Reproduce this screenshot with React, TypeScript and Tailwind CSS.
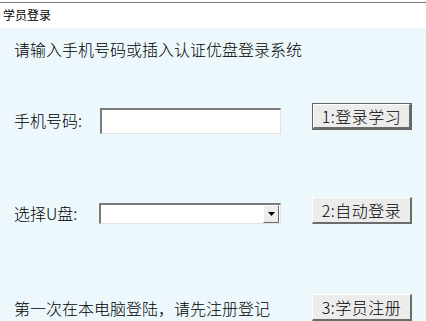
import React from 'react';

const font = { fontFamily: '"Noto Sans CJK SC", "DejaVu Sans", sans-serif' };

function WinButton({ label, isDefault }: { label: string; isDefault?: boolean }) {
  return (
    <button
      className={`ml-[31px] h-[27px] w-[100px] ${isDefault ? 'border border-[#646464]' : ''} bg-[#ececec] p-0`}
    >
      <div className="flex h-full w-full items-center justify-center border-t border-l border-t-white border-l-white border-b-2 border-r-2 border-b-[#6b6b6b] border-r-[#6b6b6b] text-[16px] font-light leading-none tracking-[0.5px] text-black">
        {label}
      </div>
    </button>
  );
}

export default function App() {
  return (
    <div className="h-[321px] w-[426px] overflow-hidden bg-white pt-[2px] font-light" style={font}>
      {/* title bar */}
      <div className="h-[26px] border-t border-[#7c7c7c] pl-[3px] pt-[4px] text-[12px] font-normal leading-[16px] text-black">
        学员登录
      </div>

      {/* main panel */}
      <div className="h-[293px] bg-[#edf8fc] pl-[14px]">
        <div className="pt-[11px] text-[16px] leading-[20px] text-black">
          请输入手机号码或插入认证优盘登录系统
        </div>

        {/* row 1 */}
        <div className="mt-[44px] flex h-[30px] items-start">
          <div className="w-[86px] pt-[7px] text-[16px] leading-[20px] text-black">手机号码:</div>
          <div className="mt-[5px] h-[26px] w-[181px] border-t-2 border-l-2 border-t-[#7a7a7a] border-l-[#7a7a7a] border-b border-r border-b-[#e3e3e3] border-r-[#e3e3e3] bg-white" />
          <WinButton label="1:登录学习" isDefault />
        </div>

        {/* row 2 */}
        <div className="mt-[64px] flex h-[27px] items-start">
          <div className="w-[85px] pt-[6px] text-[16px] leading-[20px] text-black">选择U盘:</div>
          <div className="mt-[6px] flex h-[21px] w-[182px] items-stretch border-t-2 border-l-2 border-t-[#7a7a7a] border-l-[#7a7a7a] border-b border-r border-b-[#e3e3e3] border-r-[#e3e3e3] bg-white">
            <div className="flex-1" />
            <div className="mr-[1px] flex w-[16px] items-center justify-center border-t border-l border-t-white border-l-white border-b border-r border-b-[#6b6b6b] border-r-[#6b6b6b] bg-[#ececec]">
              <svg width="7" height="4" viewBox="0 0 7 4">
                <polygon points="0,0 7,0 3.5,4" fill="#000" />
              </svg>
            </div>
          </div>
          <WinButton label="2:自动登录" />
        </div>

        {/* row 3 */}
        <div className="mt-[70px] flex h-[27px] items-start">
          <div className="w-[267px] pt-[4px] text-[16px] leading-[20px] text-black">第一次在本电脑登陆，请先注册登记</div>
          <WinButton label="3:学员注册" />
        </div>
      </div>
    </div>
  );
}
